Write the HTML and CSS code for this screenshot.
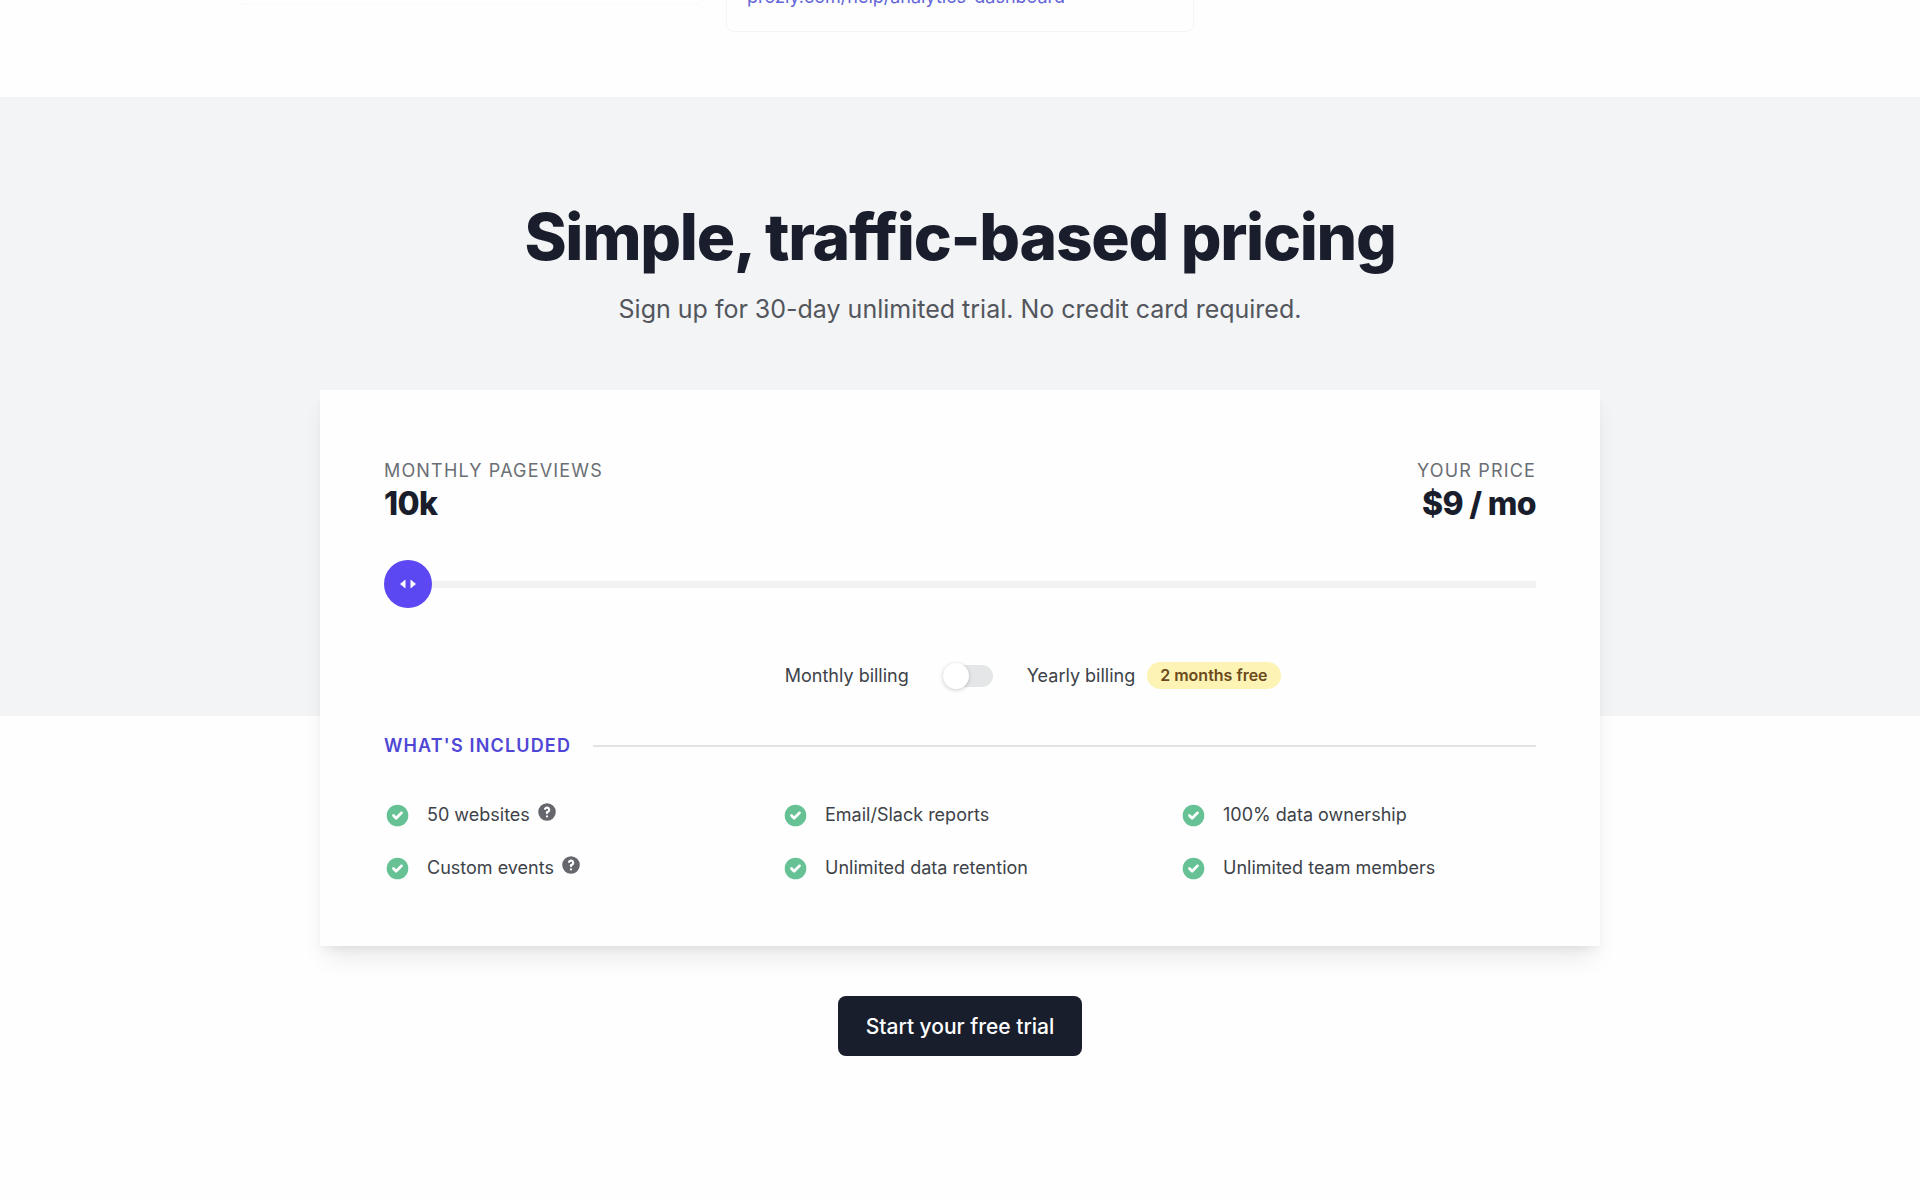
FILE: index.html
```html
<!DOCTYPE html>
<html lang="en">
<head>
    <meta charset="UTF-8">
    <meta name="viewport" content="width=device-width, initial-scale=1.0">
    <title>Pricing</title>
    <link rel="stylesheet" href="styles.css">
</head>
<body>
    <svg class="sprite" aria-hidden="true">
        <symbol id="icon-check" viewBox="0 0 20 20">
            <path fill-rule="evenodd" d="M10 18a8 8 0 100-16 8 8 0 000 16zm3.707-9.293a1 1 0 00-1.414-1.414L9 10.586 7.707 9.293a1 1 0 00-1.414 1.414l2 2a1 1 0 001.414 0l4-4z"/>
        </symbol>
        <symbol id="icon-question" viewBox="0 0 20 20">
            <path fill-rule="evenodd" d="M18 10a8 8 0 11-16 0 8 8 0 0116 0zm-8-3a1 1 0 00-.867.5 1 1 0 11-1.731-1A3 3 0 0113 8a3.001 3.001 0 01-2 2.83V11a1 1 0 11-2 0v-1a1 1 0 011-1 1 1 0 100-2zm0 8a1 1 0 100-2 1 1 0 000 2z"/>
        </symbol>
    </svg>

    <section class="questions">
        <div class="question-list">
            <div class="question-card short"></div>
            <div class="question-card">
                <a href="#">prozly.com/help/analytics-dashboard</a>
            </div>
        </div>
    </section>

    <section class="pricing">
        <h1>Simple, traffic-based pricing</h1>
        <p class="lead">Sign up for 30-day unlimited trial. No credit card required.</p>

        <div class="card">
            <div class="summary">
                <div>
                    <label class="label" for="pageviews">Monthly pageviews</label>
                    <div class="value">10k</div>
                </div>
                <div class="price">
                    <div class="label">Your price</div>
                    <div class="value">$9 / mo</div>
                </div>
            </div>

            <div class="slider">
                <input type="range" id="pageviews" min="0" max="8" value="0">
                <svg class="slider-arrows" viewBox="0 0 16 10" aria-hidden="true">
                    <path d="M5.500 0.500v9L0 5zM10.500 0.500v9L16 5z"/>
                </svg>
            </div>

            <div class="billing">
                <span>Monthly billing</span>
                <input type="checkbox" id="yearly" class="toggle">
                <label class="yearly" for="yearly">Yearly billing <span class="badge">2 months free</span></label>
            </div>

            <h2>What's included</h2>

            <ul class="features">
                <li><svg class="check"><use href="#icon-check"/></svg>50 websites <svg class="help"><use href="#icon-question"/></svg></li>
                <li><svg class="check"><use href="#icon-check"/></svg>Email/Slack reports</li>
                <li><svg class="check"><use href="#icon-check"/></svg>100% data ownership</li>
                <li><svg class="check"><use href="#icon-check"/></svg>Custom events <svg class="help"><use href="#icon-question"/></svg></li>
                <li><svg class="check"><use href="#icon-check"/></svg>Unlimited data retention</li>
                <li><svg class="check"><use href="#icon-check"/></svg>Unlimited team members</li>
            </ul>
        </div>

        <button type="button" class="cta">Start your free trial</button>
    </section>
</body>
</html>
```
FILE: styles.css
```css
* {
    margin: 0;
    padding: 0;
    box-sizing: border-box;
}

body {
    font-family: Inter, "Liberation Sans", sans-serif;
    font-size: 18px;
    line-height: 28px;
    color: #3d4248;
    background: #fefefe;
}

.sprite {
    display: none;
}

/* Tail of the questions list */
.questions {
    height: 97px;
    overflow: hidden;
}

.question-list {
    display: grid;
    grid-template-columns: repeat(3, 1fr);
    gap: 22px;
    align-items: start;
    max-width: 1448px;
    margin: -38px auto 0;
}

.question-card {
    padding: 20px;
    border: 1px solid #f5f5f6;
    border-radius: 8px;
}

.question-card.short {
    height: 43px;
    border-color: #fafafa;
}

.question-card a {
    color: #6366d8;
    text-decoration: none;
}

/* Pricing */
.pricing {
    padding: 100px 32px 144px;
    text-align: center;
    background: linear-gradient(#f3f4f6, #f3f4f6) no-repeat 0 0 / 100% 619px;
}

h1 {
    font-size: 64px;
    line-height: 80px;
    font-weight: 800;
    letter-spacing: -0.02em;
    color: #1a1e2c;
}

.lead {
    margin-top: 12px;
    font-size: 25px;
    line-height: 40px;
    color: #52565c;
}

.card {
    max-width: 1280px;
    margin: 61px auto 50px;
    padding: 64px;
    text-align: left;
    background: #fefefe;
    box-shadow: 0 16px 24px -6px rgba(0, 0, 0, 0.09), 0 6px 10px -4px rgba(0, 0, 0, 0.07);
}

.summary {
    display: flex;
    justify-content: space-between;
}

.label {
    display: block;
    line-height: 34px;
    letter-spacing: 0.065em;
    text-transform: uppercase;
    color: #6b6e74;
}

.value {
    font-size: 32px;
    line-height: 32px;
    font-weight: 800;
    letter-spacing: -0.02em;
    color: #1a1e2c;
}

.price {
    text-align: right;
}

/* Slider */
.slider {
    position: relative;
    height: 48px;
    margin: 40px 0 54px;
}

.slider input {
    display: block;
    width: 100%;
    height: 48px;
    appearance: none;
    background: linear-gradient(#f2f2f3, #f2f2f3) no-repeat center / 100% 7px;
    cursor: pointer;
}

.slider input::-webkit-slider-thumb {
    appearance: none;
    width: 48px;
    height: 48px;
    border-radius: 50%;
    background: #5b48f2;
}

.slider-arrows {
    position: absolute;
    left: 16px;
    top: 19px;
    width: 16px;
    height: 10px;
    fill: #fff;
    pointer-events: none;
}

/* Billing period */
.billing {
    display: flex;
    align-items: center;
    justify-content: center;
    gap: 34px;
}

.toggle {
    position: relative;
    width: 50px;
    height: 22px;
    appearance: none;
    border-radius: 11px;
    background: #e5e6e7;
}

.toggle::before {
    content: "";
    position: absolute;
    left: 0;
    top: -2px;
    width: 26px;
    height: 26px;
    border-radius: 50%;
    background: #fff;
    box-shadow: 0 1px 4px rgba(0, 0, 0, 0.2);
}

.toggle:checked::before {
    left: 24px;
}

.yearly {
    position: relative;
}

.badge {
    position: absolute;
    left: 100%;
    top: 0;
    margin-left: 12px;
    padding: 0 13px;
    border-radius: 14px;
    font-size: 16px;
    line-height: 27px;
    font-weight: 600;
    white-space: nowrap;
    color: #6b4a1b;
    background: #fdf3b4;
}

/* Included features */
h2 {
    display: flex;
    align-items: center;
    gap: 22px;
    margin-top: 42px;
    font-size: 18px;
    line-height: 28px;
    font-weight: 600;
    letter-spacing: 0.065em;
    text-transform: uppercase;
    color: #4f46d5;
}

h2::after {
    content: "";
    flex: 1;
    height: 2px;
    background: #e3e3e4;
}

.features {
    display: grid;
    grid-template-columns: repeat(3, 1fr);
    gap: 25px 42px;
    margin-top: 41px;
    list-style: none;
}

.features li {
    display: flex;
    align-items: center;
}

.check {
    width: 27px;
    height: 27px;
    margin-right: 16px;
    fill: #66c295;
}

.help {
    width: 22px;
    height: 22px;
    margin: 0 0 6px 6px;
    fill: #66676c;
}

.cta {
    height: 60px;
    padding: 0 28px;
    border: 0;
    border-radius: 8px;
    font-family: inherit;
    font-size: 21px;
    font-weight: 500;
    color: #fff;
    background: #191e2c;
    cursor: pointer;
}
```
